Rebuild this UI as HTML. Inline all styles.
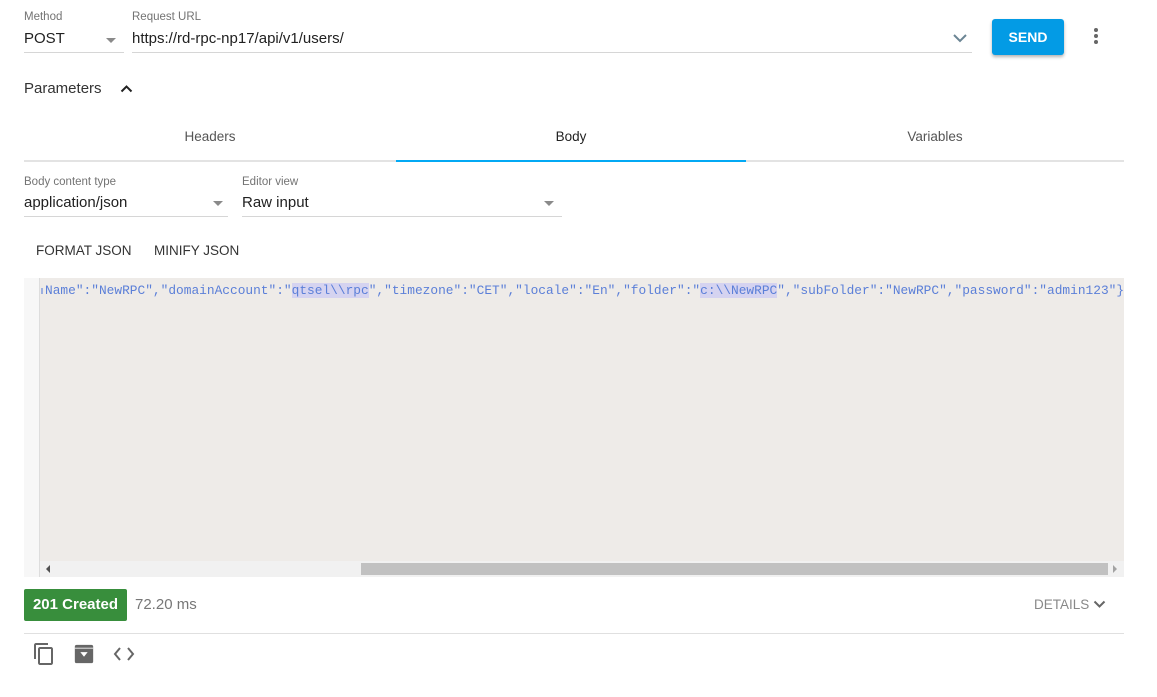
<!DOCTYPE html>
<html><head><meta charset="utf-8"><style>
*{box-sizing:border-box;margin:0;padding:0}
body{width:1157px;height:697px;background:#fff;font-family:"Liberation Sans",sans-serif;position:relative;overflow:hidden;color:#212121}
.a{position:absolute}
.lbl{font-size:11.5px;color:#737373}
.val{font-size:15px;color:#212121}
.line{height:1px;background:#d6d6d6}
.tri{width:0;height:0;border-left:5px solid transparent;border-right:5px solid transparent;border-top:5px solid #8a8a8a}
.tab{font-size:13.5px;color:#555;text-align:center}
.mono{font-family:"Liberation Mono",monospace;font-size:12.85px;color:#5b7fd8;white-space:pre}
.hl{background:#d5d3f0}
</style></head><body>
<div class="a lbl" style="left:24px;top:11px">Method</div>
<div class="a val" style="left:24px;top:30px">POST</div>
<div class="a tri" style="left:106px;top:38px"></div>
<div class="a line" style="left:24px;top:52px;width:100px"></div>
<div class="a lbl" style="left:132px;top:11px">Request URL</div>
<div class="a val" style="left:132px;top:30px">https://rd-rpc-np17/api/v1/users/</div>
<svg class="a" style="left:953px;top:33px" width="14" height="10"><path d="M1 2 L7 8 L13 2" stroke="#6b8594" stroke-width="2" fill="none"/></svg>
<div class="a line" style="left:132px;top:52px;width:840px"></div>
<div class="a" style="left:992px;top:19px;width:72px;height:36px;background:#039be5;border-radius:3px;box-shadow:0 2px 3px rgba(0,0,0,.3);color:#fff;font-size:14px;font-weight:bold;text-align:center;line-height:36px">SEND</div>
<div class="a" style="left:1094px;top:28px;width:4px;height:4px;border-radius:2px;background:#666"></div>
<div class="a" style="left:1094px;top:34px;width:4px;height:4px;border-radius:2px;background:#666"></div>
<div class="a" style="left:1094px;top:40px;width:4px;height:4px;border-radius:2px;background:#666"></div>
<div class="a" style="left:24px;top:80px;font-size:15px;color:#333">Parameters</div>
<svg class="a" style="left:120px;top:84px" width="13" height="9"><path d="M1.5 7.5 L6.5 2.5 L11.5 7.5" stroke="#222" stroke-width="2" fill="none"/></svg>
<div class="a tab" style="left:24px;top:129px;width:372px">Headers</div>
<div class="a tab" style="left:396px;top:129px;width:350px;color:#222">Body</div>
<div class="a tab" style="left:746px;top:129px;width:378px">Variables</div>
<div class="a" style="left:24px;top:160px;width:1100px;height:2px;background:#e3e3e3"></div>
<div class="a" style="left:396px;top:160px;width:350px;height:2px;background:#03a9f4"></div>
<div class="a lbl" style="left:24px;top:176px">Body content type</div>
<div class="a val" style="left:24px;top:194px">application/json</div>
<div class="a tri" style="left:213px;top:201px"></div>
<div class="a line" style="left:24px;top:216px;width:204px"></div>
<div class="a lbl" style="left:242px;top:176px">Editor view</div>
<div class="a val" style="left:242px;top:194px">Raw input</div>
<div class="a tri" style="left:544px;top:201px"></div>
<div class="a line" style="left:242px;top:216px;width:320px"></div>
<div class="a" style="left:36px;top:243px;font-size:13.5px;color:#333">FORMAT JSON</div>
<div class="a" style="left:154px;top:243px;font-size:13.5px;color:#333">MINIFY JSON</div>
<div class="a" style="left:24px;top:278px;width:1100px;height:299px;background:#eeebe8"></div>
<div class="a" style="left:24px;top:278px;width:16px;height:299px;background:#f7f7f7;border-right:1px solid #ddd"></div>
<div class="a" style="left:41px;top:288px;width:2px;height:6px;background:#9db0e0"></div>
<div class="a mono" style="left:45px;top:283px">Name":"NewRPC","domainAccount":"<span class="hl">qtsel\\rpc</span>","timezone":"CET","locale":"En","folder":"<span class="hl">c:\\NewRPC</span>","subFolder":"NewRPC","password":"admin123"}</div>
<div class="a" style="left:40px;top:561px;width:1084px;height:16px;background:#f1f1f1"></div>
<div class="a" style="left:361px;top:563px;width:747px;height:12px;background:#c1c1c1"></div>
<div class="a" style="left:46px;top:565px;width:0;height:0;border-top:4px solid transparent;border-bottom:4px solid transparent;border-right:4px solid #505050"></div>
<div class="a" style="left:1113px;top:565px;width:0;height:0;border-top:4px solid transparent;border-bottom:4px solid transparent;border-left:4px solid #a3a3a3"></div>
<div class="a" style="left:24px;top:589px;width:103px;height:32px;background:#388e3c;border-radius:2px;color:#fff;font-size:15px;font-weight:bold;text-align:center;line-height:32px">201 Created</div>
<div class="a" style="left:135px;top:596px;font-size:15px;color:#777">72.20 ms</div>
<div class="a" style="left:1034px;top:597px;font-size:13.5px;color:#888">DETAILS</div>
<svg class="a" style="left:1093px;top:600px" width="13" height="9"><path d="M1.5 1.5 L6.5 6.5 L11.5 1.5" stroke="#666" stroke-width="2" fill="none"/></svg>
<div class="a" style="left:24px;top:633px;width:1100px;height:1px;background:#e0e0e0"></div>
<svg class="a" style="left:32px;top:642px" width="24" height="24" viewBox="0 0 24 24"><path d="M16 1H4c-1.1 0-2 .9-2 2v14h2V3h12V1zm3 4H8c-1.1 0-2 .9-2 2v14c0 1.1.9 2 2 2h11c1.1 0 2-.9 2-2V7c0-1.1-.9-2-2-2zm0 16H8V7h11v14z" fill="#666"/></svg>
<svg class="a" style="left:73px;top:643px" width="22" height="22" viewBox="0 0 24 24"><rect x="2" y="2" width="20" height="20" rx="2" fill="#666"/><path d="M8 10h8l-4 5z" fill="#fff"/><rect x="2" y="5" width="20" height="1.5" fill="#fff" opacity=".6"/></svg>
<svg class="a" style="left:113px;top:645px" width="22" height="18" viewBox="0 0 22 18"><path d="M7 3 L2 9 L7 15 M15 3 L20 9 L15 15" stroke="#666" stroke-width="2" fill="none"/></svg>
</body></html>
